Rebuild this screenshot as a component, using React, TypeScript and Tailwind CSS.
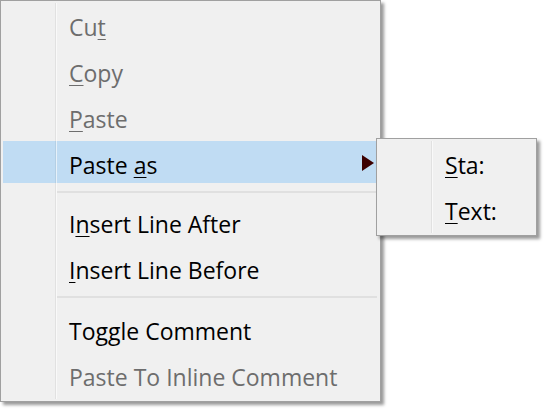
import React from 'react';

type Item = {
  kind: 'item';
  label: React.ReactNode;
  disabled?: boolean;
  active?: boolean;
  submenu?: boolean;
};
type Sep = { kind: 'sep'; className: string };

// underline the access-key letter
const U = ({ children }: { children: React.ReactNode }) => (
  <span className="underline decoration-1 underline-offset-[3px]">{children}</span>
);

const items: (Item | Sep)[] = [
  { kind: 'item', label: <>Cu<U>t</U></>, disabled: true },
  { kind: 'item', label: <><U>C</U>opy</>, disabled: true },
  { kind: 'item', label: <><U>P</U>aste</>, disabled: true },
  { kind: 'item', label: <>Paste <U>a</U>s</>, active: true, submenu: true },
  { kind: 'sep', className: 'pt-[4px] pb-[7px]' },
  { kind: 'item', label: <>I<U>n</U>sert Line After</> },
  { kind: 'item', label: <><U>I</U>nsert Line Before</> },
  { kind: 'sep', className: 'pt-[4px] pb-[9px]' },
  { kind: 'item', label: 'Toggle Comment' },
  { kind: 'item', label: 'Paste To Inline Comment', disabled: true },
];

function MenuRow({ item }: { item: Item }) {
  return (
    <div
      className={`flex h-[42px] mb-1 items-center pl-[66px] pr-[4px] ${
        item.active ? 'bg-[#c0dcf3]' : ''
      } ${item.disabled ? 'text-[#6d6d6d]' : 'text-black'}`}
    >
      <span className="flex-1 pt-[7px] whitespace-nowrap">{item.label}</span>
      {item.submenu && (
        <svg width="12" height="16" viewBox="0 0 12 16" className="mt-[2px]">
          <path d="M0 0 L12 8 L0 16 Z" fill="#3c0000" />
        </svg>
      )}
    </div>
  );
}

function Gutter() {
  return (
    <>
      <div className="absolute left-[54px] top-[2px] bottom-[2px] w-px bg-black/[0.06]" />
      <div className="absolute left-[55px] top-[2px] bottom-[2px] w-px bg-white/60" />
    </>
  );
}

export default function App() {
  return (
    <div
      className="relative w-[545px] h-[412px] bg-white text-[23px] leading-none"
      style={{ fontFamily: '"Open Sans", "Noto Sans", sans-serif' }}
    >
      {/* main menu */}
      <div className="relative w-[381px] h-[402px] border border-[#a0a0a0] bg-[#f0f0f0] p-[2px] shadow-[3px_3px_3px_rgba(0,0,0,0.4)]">
        {items.map((it, i) =>
          it.kind === 'sep' ? (
            <div key={i} className={`pl-[54px] pr-[1px] ${it.className}`}>
              <div className="h-[2px] bg-[#e0e0e0]" />
            </div>
          ) : (
            <MenuRow key={i} item={it} />
          )
        )}
        <Gutter />
      </div>

      {/* submenu */}
      <div className="absolute left-[376px] top-[138px] w-[161px] h-[98px] border border-[#a0a0a0] bg-[#f0f0f0] p-[2px] shadow-[3px_3px_3px_rgba(0,0,0,0.4)]">
        <MenuRow item={{ kind: 'item', label: <><U>S</U>ta:</> }} />
        <MenuRow item={{ kind: 'item', label: <><U>T</U>ext:</> }} />
        <Gutter />
      </div>
    </div>
  );
}
